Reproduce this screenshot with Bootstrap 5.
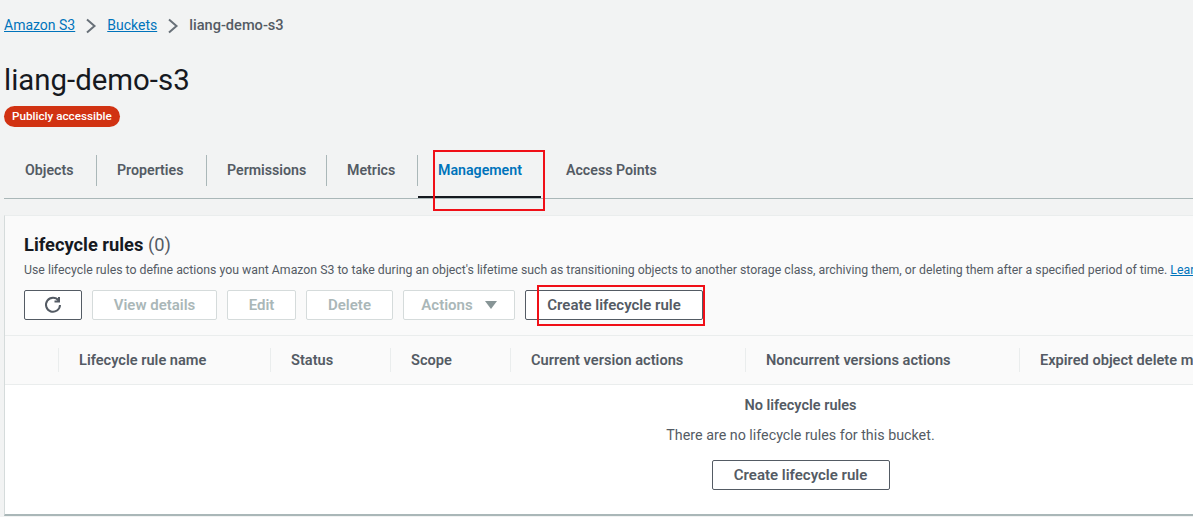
<!DOCTYPE html>
<html lang="en">

<head>
    <meta charset="UTF-8">
    <meta name="viewport" content="width=device-width, initial-scale=1.0">
    <title>liang-demo-s3 - Management</title>
    <link href="https://cdn.jsdelivr.net/npm/bootstrap@5.3.2/dist/css/bootstrap.min.css" rel="stylesheet">
    <style>
        html, body { height: 517px; overflow: hidden; }
        body { background: #f2f3f3; color: #16191f; font-family: Roboto, "Noto Sans", sans-serif; position: relative; }
        .crumbs { height: 51px; padding-left: 4px; font-size: 14px; }
        .crumbs a { color: #0073bb; }
        .crumbs svg { margin: 0 10px; }
        .crumbs .here { color: #545b64; font-weight: 500; font-size: 14.6px; }
        .page-title { font-size: 29.4px; line-height: 38px; font-weight: 400; margin: 10px 0 7px 4px; color: #16191f; }
        .pub-badge { background: #d13212; color: #fff; font-size: 11.7px; font-weight: 500; line-height: 21px; height: 21px; padding: 0 8px; border-radius: 11px; margin-left: 4px; width: 116px; white-space: nowrap; }
        .tab-bar { margin: 15px 0 0 4px; height: 57px; border-bottom: 1px solid #aab7b8; }
        .tab-item { height: 56px; padding: 2px 0 0 21px; font-size: 14.2px; font-weight: 600; color: #545b64; position: relative; }
        .tab-item + .tab-item::before { content: ""; position: absolute; left: 0; top: 13px; height: 31px; width: 1px; background: #aab7b8; }
        .tab-active { color: #0073bb; }
        .tab-active::after { content: ""; position: absolute; left: 1px; right: 0; bottom: 0; height: 2px; background: #16191f; }
        .tab-w1 { width: 92px; }
        .tab-w2 { width: 110px; }
        .tab-w3 { width: 120px; }
        .tab-w4 { width: 91px; }
        .tab-w5 { width: 124px; }
        .tab-w6 { width: 130px; padding-left: 25px; }
        .tab-w6::before { display: none; }
        .rules-panel { margin: 16px 0 0 4px; height: 301px; background: #fff; border-top: 1px solid #eaeded; border-bottom: 2px solid #aab7b8; border-left: 1px solid #d5dbdb; overflow: hidden; }
        .panel-head { background: #fafafa; height: 120px; padding: 17px 0 0 19px; border-bottom: 1px solid #eaeded; white-space: nowrap; }
        .panel-title { font-size: 18.3px; line-height: 24px; font-weight: 700; margin: 0; }
        .panel-title span { font-weight: 400; color: #545b64; }
        .panel-desc { font-size: 12.3px; line-height: 18px; color: #545b64; margin: 4px 0 11px; }
        .panel-desc a { color: #0073bb; }
        .aws-btn { height: 30px; font-size: 15px; font-weight: 600; line-height: 1; padding: 0; border-radius: 2px; background: #fff; color: #545b64; border: 1px solid #545b64; white-space: nowrap; }
        .aws-btn:disabled { opacity: 1; color: #aab7b8; background: #fff; border-color: #d5dbdb; }
        .btn-row { gap: 10px; }
        .btn-w1 { width: 58px; }
        .btn-w2 { width: 125px; }
        .btn-w3 { width: 69px; }
        .btn-w4 { width: 87px; }
        .btn-w5 { width: 112px; }
        .btn-w6 { width: 178px; }
        .caret-down { width: 0; height: 0; border-left: 6px solid transparent; border-right: 6px solid transparent; border-top: 8px solid #879596; margin-left: 12px; }
        .table-head { background: #fafafa; height: 49px; border-bottom: 1px solid #eaeded; font-size: 14.6px; font-weight: 600; color: #545b64; white-space: nowrap; }
        .col-h { height: 24px; border-left: 1px solid #eaeded; padding-left: 20px; flex: none; line-height: 24px; }
        .first-gap { width: 53px; flex: none; }
        .col-w1 { width: 212px; }
        .col-w2 { width: 120px; }
        .col-w3 { width: 120px; }
        .col-w4 { width: 235px; }
        .col-w5 { width: 274px; }
        .col-w6 { width: 300px; }
        .empty-state { width: 1591px; text-align: center; color: #545b64; }
        .empty-title { font-size: 14.5px; font-weight: 600; line-height: 20px; margin: 11px 0 9px; }
        .empty-text { font-size: 14.3px; line-height: 20px; margin: 0 0 15px; }
        .red-box { position: absolute; border: 2px solid #f00f17; }
        .box-tab { left: 433px; top: 150px; width: 112px; height: 61px; }
        .box-create { left: 537px; top: 285px; width: 168px; height: 41px; }
    </style>
</head>

<body>
    <nav class="crumbs d-flex align-items-center">
        <a href="#">Amazon S3</a>
        <svg width="12" height="16" viewBox="0 0 12 16" fill="none" stroke="#687078" stroke-width="2"><path d="M2 1.500 9.500 8 2 14.500"/></svg>
        <a href="#">Buckets</a>
        <svg width="12" height="16" viewBox="0 0 12 16" fill="none" stroke="#687078" stroke-width="2"><path d="M2 1.500 9.500 8 2 14.500"/></svg>
        <span class="here">liang-demo-s3</span>
    </nav>

    <h1 class="page-title">liang-demo-s3</h1>
    <div class="pub-badge">Publicly accessible</div>

    <div class="tab-bar d-flex">
        <div class="tab-item d-flex align-items-center tab-w1">Objects</div>
        <div class="tab-item d-flex align-items-center tab-w2">Properties</div>
        <div class="tab-item d-flex align-items-center tab-w3">Permissions</div>
        <div class="tab-item d-flex align-items-center tab-w4">Metrics</div>
        <div class="tab-item tab-active d-flex align-items-center tab-w5">Management</div>
        <div class="tab-item d-flex align-items-center tab-w6">Access Points</div>
    </div>

    <section class="rules-panel">
        <div class="panel-head">
            <h2 class="panel-title">Lifecycle rules <span>(0)</span></h2>
            <p class="panel-desc">Use lifecycle rules to define actions you want Amazon S3 to take during an object's lifetime such as transitioning objects to another storage class, archiving them, or deleting them after a specified period of time. <a href="#">Learn more</a></p>
            <div class="d-flex btn-row">
                <button type="button" class="btn aws-btn btn-w1 d-flex align-items-center justify-content-center" aria-label="Refresh">
                    <svg width="18" height="18" viewBox="0 0 18 18" fill="none" stroke="#545b64" stroke-width="2"><path d="M14.600 4.600A7 7 0 1 0 16 9"/><path d="M15 1v4.500h-4.500"/></svg>
                </button>
                <button type="button" class="btn aws-btn btn-w2" disabled>View details</button>
                <button type="button" class="btn aws-btn btn-w3" disabled>Edit</button>
                <button type="button" class="btn aws-btn btn-w4" disabled>Delete</button>
                <button type="button" class="btn aws-btn btn-w5 d-flex align-items-center justify-content-center" disabled>Actions<span class="caret-down"></span></button>
                <button type="button" class="btn aws-btn btn-w6">Create lifecycle rule</button>
            </div>
        </div>
        <div class="table-head d-flex align-items-center">
            <div class="first-gap"></div>
            <div class="col-h col-w1">Lifecycle rule name</div>
            <div class="col-h col-w2">Status</div>
            <div class="col-h col-w3">Scope</div>
            <div class="col-h col-w4">Current version actions</div>
            <div class="col-h col-w5">Noncurrent versions actions</div>
            <div class="col-h col-w6">Expired object delete markers</div>
        </div>
        <div class="empty-state">
            <p class="empty-title">No lifecycle rules</p>
            <p class="empty-text">There are no lifecycle rules for this bucket.</p>
            <button type="button" class="btn aws-btn btn-w6">Create lifecycle rule</button>
        </div>
    </section>

    <div class="red-box box-tab"></div>
    <div class="red-box box-create"></div>

    <script src="https://cdn.jsdelivr.net/npm/bootstrap@5.3.2/dist/js/bootstrap.bundle.min.js"></script>
</body>

</html>
